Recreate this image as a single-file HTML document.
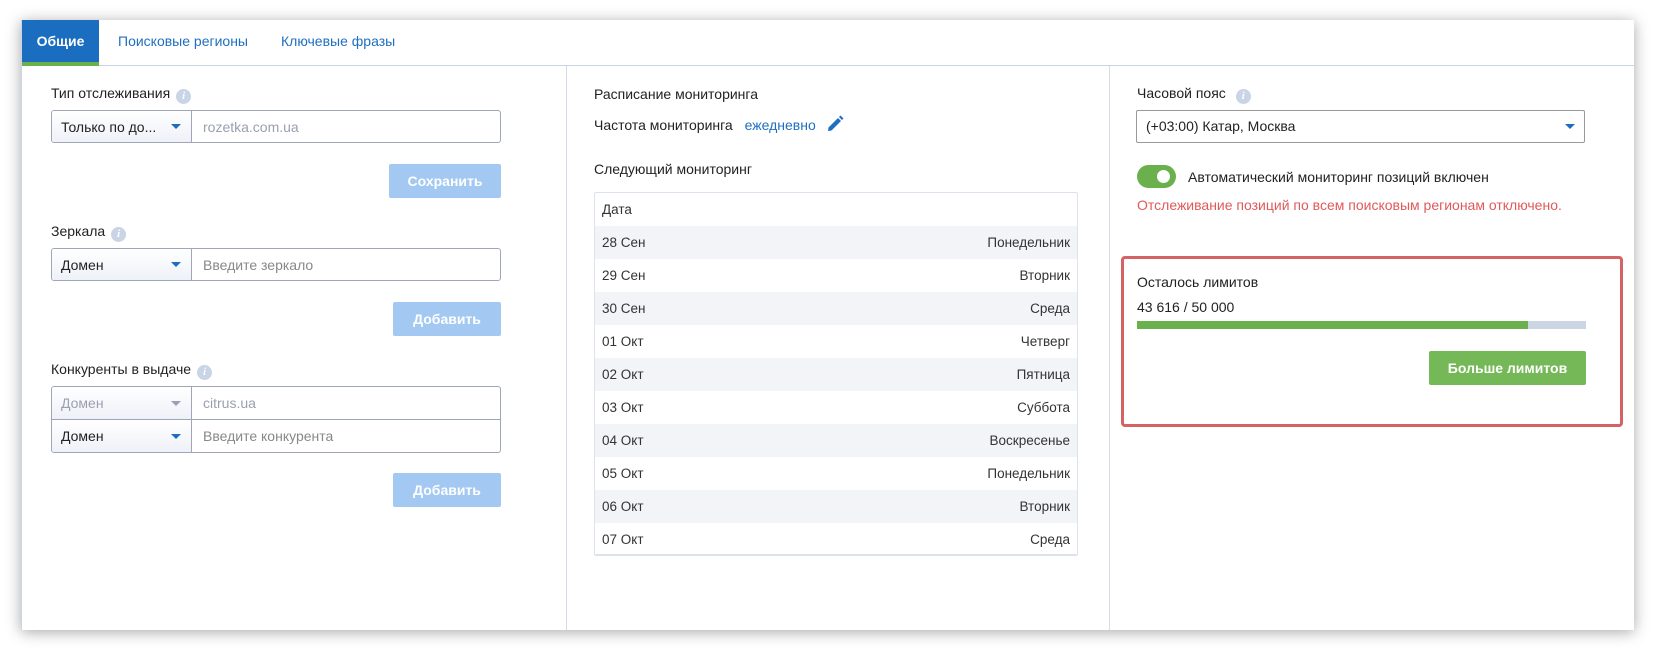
<!DOCTYPE html>
<html><head><meta charset="utf-8"><style>
*{box-sizing:border-box;margin:0;padding:0}
body{width:1654px;height:650px;background:#fff;font-family:"Liberation Sans",sans-serif;font-size:14px;color:#222;position:relative;overflow:hidden}
.a{position:absolute}
.card{left:21px;top:20px;width:1613px;height:610px;background:#fff;box-shadow:0 2px 14px rgba(0,0,0,.35);border-left:1px solid #c9d6ea}
.tabbar{left:21px;top:20px;width:1613px;height:46px;border-bottom:1px solid #c8d3e3}
.tab{top:20px;height:46px;line-height:42px;font-size:14px;color:#1f6fc0}
.act{left:22px;width:77px;background:#1a6dbf;color:#fff;font-weight:bold;text-align:center;border-bottom:4px solid #6ab04c}
.vl{top:66px;width:1px;height:564px;background:#d5dce8}
.lbl{font-size:14px;color:#222;line-height:16px}
.info{display:inline-block;width:15px;height:15px;border-radius:50%;background:#c9d4e6;color:#fff;font-size:11px;font-style:italic;font-weight:bold;text-align:center;line-height:15px;vertical-align:-1px;margin-left:6px;font-family:"Liberation Serif",serif}
.grp{border:1px solid #9ea6b8;border-radius:3px;background:#fff;display:flex;overflow:hidden}
.sel{width:140px;border-right:1px solid #9ea6b8;background:linear-gradient(#fff,#eef1f8);padding-left:9px;display:flex;align-items:center;justify-content:space-between;padding-right:10px;font-size:14px}
.tri{width:0;height:0;border-left:5px solid transparent;border-right:5px solid transparent;border-top:5px solid #1a6dbf}
.inp{padding-left:11px;display:flex;align-items:center;color:#888;font-size:14px}
.btn{background:#a3c9f3;color:#fff;font-weight:bold;border-radius:2px;text-align:center;font-size:14px}
.row{position:absolute;left:0;width:100%;height:33px;line-height:33px;padding:0 7px;display:flex;justify-content:space-between;font-size:13.5px;color:#333}
.sh{background:#f2f4f8}
</style></head><body>
<div class="a card"></div>
<div class="a tabbar"></div>
<div class="a tab act">Общие</div>
<div class="a tab" style="left:118px">Поисковые регионы</div>
<div class="a tab" style="left:281px">Ключевые фразы</div>
<div class="a vl" style="left:566px"></div>
<div class="a vl" style="left:1109px"></div>

<!-- col1 -->
<div class="a lbl" style="left:51px;top:85px">Тип отслеживания<span class="info">i</span></div>
<div class="a grp" style="left:51px;top:110px;width:450px;height:33px"><div class="sel"><span>Только по до...</span><i class="tri"></i></div><div class="inp" style="color:#9aa0b0">rozetka.com.ua</div></div>
<div class="a btn" style="left:389px;top:164px;width:112px;height:34px;line-height:34px">Сохранить</div>

<div class="a lbl" style="left:51px;top:223px">Зеркала<span class="info">i</span></div>
<div class="a grp" style="left:51px;top:248px;width:450px;height:33px"><div class="sel"><span>Домен</span><i class="tri"></i></div><div class="inp">Введите зеркало</div></div>
<div class="a btn" style="left:393px;top:302px;width:108px;height:34px;line-height:34px">Добавить</div>

<div class="a lbl" style="left:51px;top:361px">Конкуренты в выдаче<span class="info">i</span></div>
<div class="a grp" style="left:51px;top:386px;width:450px;height:67px;flex-direction:column">
<div style="display:flex;height:33px;border-bottom:1px solid #9ea6b8"><div class="sel" style="color:#9aa0b0"><span>Домен</span><i class="tri" style="border-top-color:#9aa0b0"></i></div><div class="inp" style="color:#9aa0b0">citrus.ua</div></div>
<div style="display:flex;height:32px"><div class="sel"><span>Домен</span><i class="tri"></i></div><div class="inp">Введите конкурента</div></div>
</div>
<div class="a btn" style="left:393px;top:473px;width:108px;height:34px;line-height:34px">Добавить</div>

<!-- col2 -->
<div class="a lbl" style="left:594px;top:86px">Расписание мониторинга</div>
<div class="a lbl" style="left:594px;top:117px">Частота мониторинга <span style="color:#1f6fc0;margin-left:8px">ежедневно</span></div>
<svg class="a" style="left:826px;top:115px" width="18" height="18" viewBox="0 0 18 18"><path d="M2 16 L2.5 12.5 L12 3 L15 6 L5.5 15.5 Z" fill="#1f6fc0"/><path d="M13 2 L14.5 0.5 L17.5 3.5 L16 5 Z" fill="#1f6fc0"/></svg>
<div class="a lbl" style="left:594px;top:161px">Следующий мониторинг</div>
<div class="a" style="left:594px;top:192px;width:484px;height:364px;border:1px solid #dde3ec;border-bottom:2px solid #dde3ec;border-radius:2px">
<div class="row" style="top:0">Дата<span></span></div>
<div class="row sh" style="top:33px"><span>28 Сен</span><span>Понедельник</span></div>
<div class="row" style="top:66px"><span>29 Сен</span><span>Вторник</span></div>
<div class="row sh" style="top:99px"><span>30 Сен</span><span>Среда</span></div>
<div class="row" style="top:132px"><span>01 Окт</span><span>Четверг</span></div>
<div class="row sh" style="top:165px"><span>02 Окт</span><span>Пятница</span></div>
<div class="row" style="top:198px"><span>03 Окт</span><span>Суббота</span></div>
<div class="row sh" style="top:231px"><span>04 Окт</span><span>Воскресенье</span></div>
<div class="row" style="top:264px"><span>05 Окт</span><span>Понедельник</span></div>
<div class="row sh" style="top:297px"><span>06 Окт</span><span>Вторник</span></div>
<div class="row" style="top:330px"><span>07 Окт</span><span>Среда</span></div>
</div>

<!-- col3 -->
<div class="a lbl" style="left:1137px;top:85px">Часовой пояс<span class="info" style="margin-left:10px">i</span></div>
<div class="a" style="left:1136px;top:110px;width:449px;height:33px;border:1px solid #999;border-radius:2px;padding-left:9px;line-height:31px">(+03:00) Катар, Москва<i class="tri a" style="right:9px;top:13px"></i></div>
<div class="a" style="left:1137px;top:165px;width:39px;height:23px;border-radius:12px;background:#6ab04c"><div class="a" style="left:20px;top:5px;width:13px;height:13px;border-radius:50%;background:#fff"></div></div>
<div class="a lbl" style="left:1188px;top:169px">Автоматический мониторинг позиций включен</div>
<div class="a lbl" style="left:1137px;top:197px;color:#e05a5a">Отслеживание позиций по всем поисковым регионам отключено.</div>
<div class="a" style="left:1121px;top:256px;width:502px;height:171px;border:3px solid #d46363;border-radius:4px"></div>
<div class="a lbl" style="left:1137px;top:274px">Осталось лимитов</div>
<div class="a lbl" style="left:1137px;top:299px">43 616 / 50 000</div>
<div class="a" style="left:1137px;top:321px;width:449px;height:8px;background:#ccd5e3"><div style="width:391px;height:8px;background:#6ab04c"></div></div>
<div class="a btn" style="left:1429px;top:351px;width:157px;height:34px;line-height:34px;background:#74b857">Больше лимитов</div>
</body></html>
